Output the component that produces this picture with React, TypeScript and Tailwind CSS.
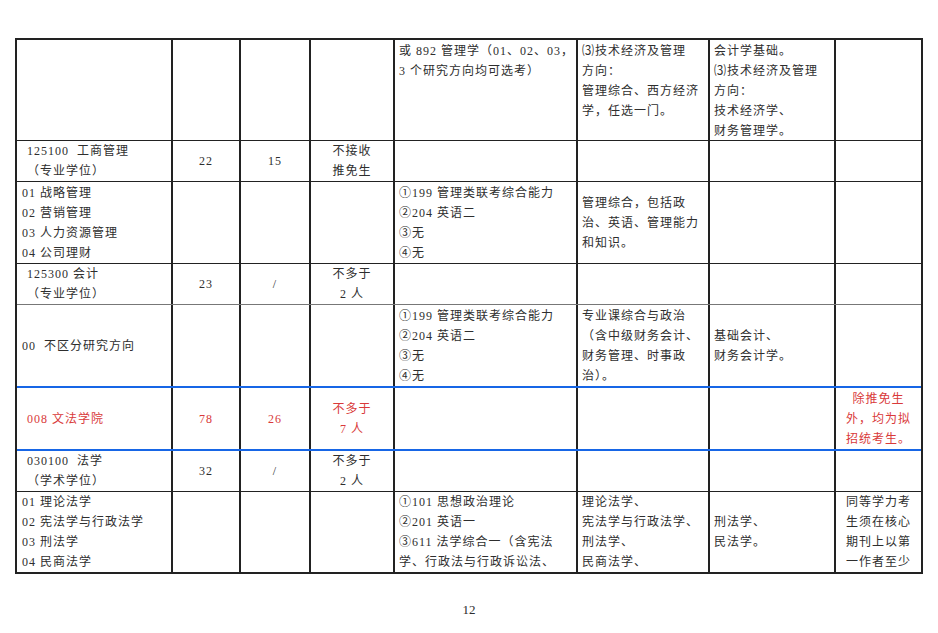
import React from "react";

type CellSpec = {
  lines?: string[];
  align?: "left" | "center";
  indent?: "sm" | "lg" | "md";
};

type RowSpec = {
  height: string;
  border: string;
  top?: boolean;
  red?: boolean;
  cells: CellSpec[];
};

const GRID_COLS =
  "grid grid-cols-[156px_68px_70px_84px_183px_132px_126px_85px]";

const ROWS: RowSpec[] = [
  {
    height: "h-[101px]",
    border: "border-b border-[#222]",
    top: true,
    cells: [
      {},
      {},
      {},
      {},
      { lines: ["或 892 管理学（01、02、03，", "3 个研究方向均可选考）"], indent: "md" },
      {
        lines: ["⑶技术经济及管理", "方向：", "管理综合、西方经济", "学，任选一门。"],
        indent: "md",
      },
      {
        lines: ["会计学基础。", "⑶技术经济及管理", "方向：", "技术经济学、", "财务管理学。"],
        indent: "md",
      },
      {},
    ],
  },
  {
    height: "h-[41px]",
    border: "border-b border-[#222]",
    cells: [
      { lines: ["125100  工商管理", "（专业学位）"], indent: "lg" },
      { lines: ["22"], align: "center" },
      { lines: ["15"], align: "center" },
      { lines: ["不接收", "推免生"], align: "center" },
      {},
      {},
      {},
      {},
    ],
  },
  {
    height: "h-[82px]",
    border: "border-b border-[#222]",
    cells: [
      { lines: ["01 战略管理", "02 营销管理", "03 人力资源管理", "04 公司理财"], indent: "sm" },
      {},
      {},
      {},
      { lines: ["①199 管理类联考综合能力", "②204 英语二", "③无", "④无"], indent: "md" },
      { lines: ["管理综合，包括政", "治、英语、管理能力", "和知识。"], indent: "md" },
      {},
      {},
    ],
  },
  {
    height: "h-[41px]",
    border: "border-b border-[#777]",
    cells: [
      { lines: ["125300 会计", "（专业学位）"], indent: "lg" },
      { lines: ["23"], align: "center" },
      { lines: ["/"], align: "center" },
      { lines: ["不多于", "2 人"], align: "center" },
      {},
      {},
      {},
      {},
    ],
  },
  {
    height: "h-[83px]",
    border: "border-b-2 border-[#1766e6]",
    cells: [
      { lines: ["00  不区分研究方向"], indent: "sm" },
      {},
      {},
      {},
      { lines: ["①199 管理类联考综合能力", "②204 英语二", "③无", "④无"], indent: "md" },
      {
        lines: ["专业课综合与政治", "（含中级财务会计、", "财务管理、时事政", "治）。"],
        indent: "md",
      },
      { lines: ["基础会计、", "财务会计学。"], indent: "md" },
      {},
    ],
  },
  {
    height: "h-[63px]",
    border: "border-b-2 border-[#1766e6]",
    red: true,
    cells: [
      { lines: ["008 文法学院"], indent: "lg" },
      { lines: ["78"], align: "center" },
      { lines: ["26"], align: "center" },
      { lines: ["不多于", "7 人"], align: "center" },
      {},
      {},
      {},
      { lines: ["除推免生", "外，均为拟", "招统考生。"], align: "center" },
    ],
  },
  {
    height: "h-[41px]",
    border: "border-b border-[#222]",
    cells: [
      { lines: ["030100  法学", "（学术学位）"], indent: "lg" },
      { lines: ["32"], align: "center" },
      { lines: ["/"], align: "center" },
      { lines: ["不多于", "2 人"], align: "center" },
      {},
      {},
      {},
      {},
    ],
  },
  {
    height: "h-[80px]",
    border: "",
    cells: [
      {
        lines: ["01 理论法学", "02 宪法学与行政法学", "03 刑法学", "04 民商法学"],
        indent: "sm",
      },
      {},
      {},
      {},
      {
        lines: [
          "①101 思想政治理论",
          "②201 英语一",
          "③611 法学综合一（含宪法",
          "学、行政法与行政诉讼法、",
        ],
        indent: "md",
      },
      {
        lines: ["理论法学、", "宪法学与行政法学、", "刑法学、", "民商法学、"],
        indent: "md",
      },
      { lines: ["刑法学、", "民法学。"], indent: "md" },
      { lines: ["同等学力考", "生须在核心", "期刊上以第", "一作者至少"], align: "center" },
    ],
  },
];

const indentClass = (cell: CellSpec) => {
  if (cell.align === "center") return "items-center";
  if (cell.indent === "lg") return "pl-[10px]";
  if (cell.indent === "sm") return "pl-[5px]";
  return "pl-[4px]";
};

const TableCell = ({
  cell,
  last,
  top,
}: {
  cell: CellSpec;
  last: boolean;
  top?: boolean;
}) => (
  <div
    className={`flex h-full flex-col overflow-hidden ${
      top ? "justify-start pt-[1px]" : "justify-center"
    } ${last ? "" : "border-r-2 border-[#222]"} ${indentClass(cell)}`}
  >
    {cell.lines?.map((line, i) => (
      <div key={i} className="whitespace-pre leading-[20px]">
        {line}
      </div>
    ))}
  </div>
);

export default function App() {
  return (
    <div
      className="h-[633px] w-[938px] overflow-hidden bg-white text-[12px] tracking-[1px] text-[#2e2e2e]"
      style={{ fontFamily: '"Liberation Serif", "Noto Sans CJK SC", serif' }}
    >
      <div className="ml-[15px] mt-[38px] w-[908px] border-2 border-[#222]">
        {ROWS.map((row, r) => (
          <div
            key={r}
            className={`${GRID_COLS} ${row.height} ${row.border} ${
              row.red ? "text-[#d93a3a]" : ""
            }`}
          >
            {row.cells.map((cell, c) => (
              <TableCell
                key={c}
                cell={cell}
                last={c === row.cells.length - 1}
                top={row.top}
              />
            ))}
          </div>
        ))}
      </div>

      <div className="mt-[26px] text-center text-[13px] leading-[20px] tracking-normal">
        12
      </div>
    </div>
  );
}
